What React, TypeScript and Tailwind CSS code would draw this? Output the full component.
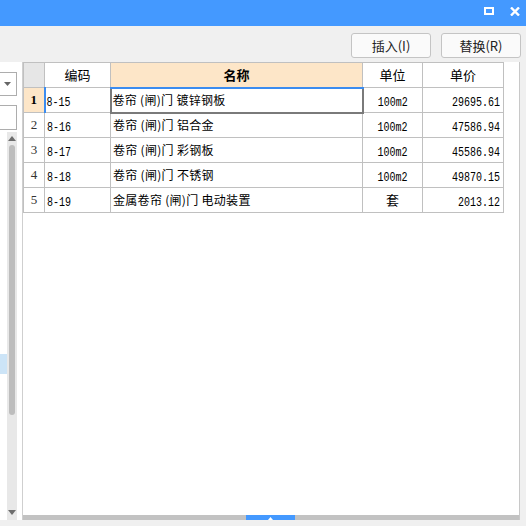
import { useState } from "react";

type Row = {
  id: number;
  code: string;
  name: string;
  unit: string;
  price: string;
};

const rows: Row[] = [
  { id: 1, code: "8-15", name: "卷帘 (闸)门 镀锌钢板", unit: "100m2", price: "29695.61" },
  { id: 2, code: "8-16", name: "卷帘 (闸)门 铝合金", unit: "100m2", price: "47586.94" },
  { id: 3, code: "8-17", name: "卷帘 (闸)门 彩钢板", unit: "100m2", price: "45586.94" },
  { id: 4, code: "8-18", name: "卷帘 (闸)门 不锈钢", unit: "100m2", price: "49870.15" },
  { id: 5, code: "8-19", name: "金属卷帘 (闸)门 电动装置", unit: "套", price: "2013.12" },
];

const cjk = "font-['SimSun','Noto_Sans_CJK_SC',sans-serif]";
const mono = "font-['Liberation_Mono','Noto_Sans_CJK_SC',monospace]";

// narrow SimSun-like digits
function Digits({ text }: { text: string }) {
  return <span className={`inline-block scale-y-125 text-[10px] ${mono}`}>{text}</span>;
}

export default function App() {
  const [activeId, setActiveId] = useState(1);

  return (
    <div className={`flex h-[526px] w-[526px] flex-col overflow-hidden bg-[#f0f0f0] text-black ${cjk}`}>
      {/* title bar */}
      <div className="flex h-[26px] shrink-0 items-center justify-end bg-[#4499ff] pr-[6px] pb-[4px]">
        <div className="mr-[16px] h-[8px] w-[10px] border-2 border-white" />
        <svg width="10" height="9" viewBox="0 0 10 9">
          <path d="M1 0.5 L9 8.5 M9 0.5 L1 8.5" stroke="#fff" strokeWidth="2.4" />
        </svg>
      </div>

      {/* toolbar */}
      <div className="flex h-[36px] shrink-0 items-start justify-end gap-[10px] pr-[5px] pt-[7px]">
        <button className="h-[25px] w-[80px] rounded-[3px] border border-[#c4c4c4] bg-[#fafafa] text-[13px] text-[#222]">
          插入(I)
        </button>
        <button className="h-[25px] w-[80px] rounded-[3px] border border-[#c4c4c4] bg-[#fafafa] text-[13px] text-[#222]">
          替换(R)
        </button>
      </div>

      {/* body */}
      <div className="flex h-[458px] shrink-0">
        {/* left panel (clipped) */}
        <div className="relative flex w-[23px] shrink-0 flex-col overflow-hidden border-r border-[#cfcfcf] bg-white">
          <div className="-ml-[40px] mt-[10px] flex h-[24px] w-[57px] shrink-0 items-center justify-end border border-[#adadad] bg-white pr-[5px]">
            <svg width="7" height="4" viewBox="0 0 7 4">
              <path d="M0 0 H7 L3.5 4 Z" fill="#666" />
            </svg>
          </div>
          <div className="-ml-[40px] mt-[9px] h-[25px] w-[57px] shrink-0 border border-[#adadad] bg-white" />
          <div className="mt-[2px] flex flex-1">
            <div className="w-[7px] shrink-0">
              <div className="mt-[222px] h-[20px] w-[7px] bg-[#cce4f7]" />
            </div>
            <div className="flex w-[10px] flex-col items-center bg-[#e8e8e8]">
              <svg width="8" height="5" viewBox="0 0 8 5" className="mt-[4px]">
                <path d="M0 5 L4 0 L8 5 Z" fill="#6d6d6d" />
              </svg>
              <div className="mt-[4px] h-[270px] w-[6px] rounded-[3px] bg-[#bdbdbd]" />
              <div className="flex-1" />
              <svg width="8" height="5" viewBox="0 0 8 5" className="mb-[5px]">
                <path d="M0 0 H8 L4 5 Z" fill="#6d6d6d" />
              </svg>
            </div>
          </div>
        </div>

        {/* grid panel */}
        <div className="flex w-[497px] shrink-0 flex-col border-r border-[#c8c8c8] bg-white">
          <div className="flex-1">
            <table className="border-collapse text-[12px]" style={{ tableLayout: "fixed" }}>
              <colgroup>
                <col className="w-[21px]" />
                <col className="w-[66px]" />
                <col className="w-[252px]" />
                <col className="w-[60px]" />
                <col className="w-[81px]" />
              </colgroup>
              <thead>
                <tr className="h-[25px]">
                  <th className="border border-[#c0c0c0] bg-[#e6e6e6]" />
                  <th className="border border-[#c0c0c0] text-[13px] font-normal">编码</th>
                  <th className="border border-[#c0c0c0] border-b-2 border-b-[#3b8cf0] bg-[#fde6c8] text-[13px] font-bold">名称</th>
                  <th className="border border-[#c0c0c0] text-[13px] font-normal">单位</th>
                  <th className="border border-[#c0c0c0] text-[13px] font-normal">单价</th>
                </tr>
              </thead>
              <tbody>
                {rows.map((row) => {
                  const active = row.id === activeId;
                  return (
                    <tr key={row.id} className="h-[25px] cursor-default" onClick={() => setActiveId(row.id)}>
                      <td
                        className={
                          active
                            ? "border border-[#c0c0c0] bg-[#fde6c8] text-center font-['Liberation_Serif',serif] text-[13px] font-bold"
                            : "border border-[#c0c0c0] text-center font-['Liberation_Serif',serif] text-[13px] text-[#333]"
                        }
                      >
                        {row.id}
                      </td>
                      <td
                        className={
                          active
                            ? "border border-[#c0c0c0] border-l-2 border-l-[#3b8cf0] pl-[1px]"
                            : "border border-[#c0c0c0] pl-[2px]"
                        }
                      >
                        <Digits text={row.code} />
                      </td>
                      <td
                        className={
                          active
                            ? "border-2 border-[#7a7a7a] pl-[1px] whitespace-nowrap tracking-[0.3px]"
                            : "border border-[#c0c0c0] pl-[2px] whitespace-nowrap tracking-[0.3px]"
                        }
                      >
                        {row.name}
                      </td>
                      <td className="border border-[#c0c0c0] text-center">
                        {row.unit === "套" ? <span className="text-[13px]">套</span> : <Digits text={row.unit} />}
                      </td>
                      <td className="border border-[#c0c0c0] pr-[3px] text-right">
                        <Digits text={row.price} />
                      </td>
                    </tr>
                  );
                })}
              </tbody>
            </table>
          </div>
          {/* horizontal scrollbar */}
          <div className="flex h-[5px] shrink-0 bg-[#c2c2c2]">
            <div className="ml-[223px] flex h-[5px] w-[49px] items-end justify-center bg-[#4499ff]">
              <svg width="5" height="3" viewBox="0 0 5 3">
                <path d="M0 3 L2.5 0 L5 3 Z" fill="#fff" />
              </svg>
            </div>
          </div>
        </div>

        <div className="flex-1" />
      </div>
    </div>
  );
}
